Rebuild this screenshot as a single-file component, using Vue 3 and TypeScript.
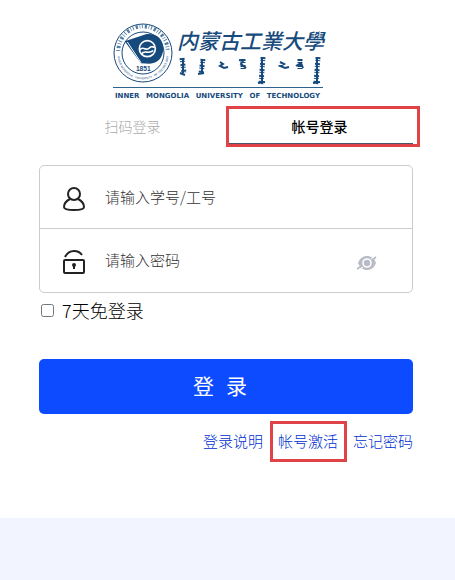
<script setup lang="ts">
import { ref } from 'vue'

type LoginMode = 'scan' | 'account'

const mode = ref<LoginMode>('account')
const account = ref('')
const password = ref('')
const remember = ref(false)
const passwordVisible = ref(false)

const englishName = ['INNER', 'MONGOLIA', 'UNIVERSITY', 'OF', 'TECHNOLOGY']
const ringWords = [
  { text: 'INNER MONGOLIA', offset: '20%' },
  { text: 'UNIVERSITY', offset: '51%' },
  { text: 'OF TECHNOLOGY', offset: '81%' },
]
const links = [
  { label: '登录说明', marked: false },
  { label: '帐号激活', marked: true },
  { label: '忘记密码', marked: false },
]
</script>

<template>
  <main class="page">
    <section class="panel">
      <header class="brand">
        <div class="brand-top">
          <svg class="seal" viewBox="0 0 180 180" aria-hidden="true">
            <defs>
              <path id="ring-lower" d="M13 92 A77 77 0 0 0 167 92" />
            </defs>
            <circle cx="90" cy="90" r="87" class="ring" stroke-width="3" />
            <path class="script" d="M16 84 A74 74 0 0 1 164 84" />
            <circle cx="90" cy="90" r="63" class="ring" stroke-width="3" />
            <text v-for="word in ringWords" :key="word.text" class="ring-text">
              <textPath href="#ring-lower" :startOffset="word.offset" text-anchor="middle">{{ word.text }}</textPath>
            </text>
            <path class="ink" d="M35 55 L101 33 C132 30 151 49 151 76 C151 104 133 122 110 122 L84 121 L76 110 Z" />
            <path d="M43 57 L84 119" stroke="#fff" stroke-width="3" fill="none" />
            <circle cx="103" cy="77" r="24" fill="none" stroke="#fff" stroke-width="5" />
            <path d="M80 81 C91 66 99 87 109 75 C114 69 119 70 125 74 M85 93 C97 78 103 96 121 83" fill="none" stroke="#fff" stroke-width="5" />
            <text x="91" y="144" class="year" text-anchor="middle">1851</text>
          </svg>
          <div class="names">
            <div class="chinese-name">内蒙古工業大學</div>
            <svg class="mongolian" viewBox="0 0 147 30" aria-hidden="true">
              <path class="stems" d="M6 1V16M25 2V17M85 0V27M140 0V27" />
              <path class="teeth" d="M5 1L7 16M26 2L24 17M66 2V12M86 0L84 27M123 2V12M141 0L139 27" />
              <path class="strokes" d="M43 5l3 2-3 2 4 2 4-1M62 3l4 1-2 3 5 4M103 5l4 2-4 2 5 2 4-1M119 9l5-3 2 5M3 16l5 2M21 17l6-1M81 26l7-1M136 26l7-1" />
            </svg>
          </div>
        </div>
        <div class="english-name"><span v-for="word in englishName" :key="word">{{ word }}</span></div>
      </header>

      <div class="tabs" role="tablist">
        <button type="button" role="tab" class="tab" :class="{ active: mode === 'scan' }" :aria-selected="mode === 'scan'" @click="mode = 'scan'">扫码登录</button>
        <button type="button" role="tab" class="tab marked" :class="{ active: mode === 'account' }" :aria-selected="mode === 'account'" @click="mode = 'account'">帐号登录</button>
      </div>

      <form @submit.prevent>
        <div class="fields">
          <div class="field">
            <label for="account">
              <svg class="icon" viewBox="0 0 24 26" aria-hidden="true">
                <circle cx="12" cy="8" r="6" />
                <path d="M8 13C4 15 2 18 2 21C2 23 5 24 12 24S22 23 22 21C22 18 20 15 16 13" />
              </svg>
            </label>
            <input id="account" v-model="account" type="text" aria-label="请输入学号/工号" placeholder="请输入学号/工号" />
          </div>
          <div class="field">
            <label for="password">
              <svg class="icon" viewBox="0 0 24 26" aria-hidden="true">
                <rect x="2" y="11" width="20" height="13" rx="1" />
                <path d="M3 8C5 4 8 2 12 2C16 2 18 3 20 6" />
                <path d="M12 16V20" />
                <circle cx="12" cy="16" r="1" class="dot" />
              </svg>
            </label>
            <input id="password" v-model="password" :type="passwordVisible ? 'text' : 'password'" aria-label="请输入密码" placeholder="请输入密码" />
            <button type="button" class="eye" aria-label="显示密码" @click="passwordVisible = !passwordVisible">
              <svg viewBox="0 0 20 16" aria-hidden="true">
                <path d="M1 8C3 3 6 1 10 1S17 3 19 8C17 13 14 15 10 15S3 13 1 8Z" fill="#b9bbc6" />
                <circle cx="10" cy="8" r="4" fill="#b9bbc6" stroke="#fff" stroke-width="1.6" />
                <path d="M0 14L5 11M15 5L19 2" stroke="#b9bbc6" stroke-width="2" />
                <path d="M1 15L6 12M14 4L18 1" stroke="#fff" stroke-width="1" />
              </svg>
            </button>
          </div>
        </div>

        <label class="remember"><input v-model="remember" type="checkbox" />7天免登录</label>

        <button type="submit" class="submit"><span>登</span><span>录</span></button>
      </form>

      <nav class="links">
        <a v-for="link in links" :key="link.label" href="#" :class="{ marked: link.marked }">{{ link.label }}</a>
      </nav>
    </section>
  </main>
</template>

<style>
body {
  margin: 0;
  background: #f2f5ff;
}
</style>

<style scoped>
.page,
.page input,
.page button {
  font-family: "Noto Sans CJK SC", sans-serif;
  font-weight: 300;
}

.page * {
  box-sizing: border-box;
}

.panel {
  padding: 23px 42px 64px 39px;
  background: #fff;
}

.brand {
  width: 226px;
  margin: 0 auto;
  padding-right: 16px;
  color: #174a7c;
}

.brand-top {
  display: flex;
  gap: 4px;
  height: 65px;
  border-bottom: 1px solid #2c648e;
}

.seal {
  flex: none;
  width: 60px;
  height: 60px;
}

.ring {
  fill: none;
  stroke: #174a7c;
}

.script {
  fill: none;
  stroke: #5580a6;
  stroke-width: 12;
  stroke-dasharray: 3 6 7 5 2 5;
}

.ring-text {
  fill: #174a7c;
  font: 400 9px "Liberation Sans", sans-serif;
}

.ink {
  fill: #174a7c;
}

.year {
  fill: #174a7c;
  font: 700 20px "Liberation Sans", sans-serif;
}

.names {
  flex: 1;
  min-width: 0;
}

.chinese-name {
  height: 34px;
  font-family: "Noto Sans CJK TC", sans-serif;
  font-size: 21px;
  font-style: italic;
  font-weight: 500;
  line-height: 34px;
  white-space: nowrap;
}

.mongolian {
  display: block;
  width: 147px;
  height: 30px;
  fill: none;
  stroke: #174a7c;
}

.stems {
  stroke-width: 2;
}

.teeth {
  stroke-width: 5;
  stroke-dasharray: 2 1 1 2;
}

.strokes {
  stroke-width: 2;
}

.english-name {
  display: flex;
  justify-content: space-between;
  padding: 3px 3px 0 2px;
  font-family: "DejaVu Sans", sans-serif;
  font-size: 7px;
  font-weight: 700;
  line-height: 10px;
}

.tabs {
  display: grid;
  grid-template-columns: 1fr 1fr;
  height: 35px;
  margin-top: 8px;
}

.tab {
  position: relative;
  padding: 0;
  border: 0;
  border-bottom: 1px solid transparent;
  background: none;
  color: #aaa;
  font-size: 14px;
}

.page .tab.active {
  border-color: #49566a;
  color: #000;
  font-weight: 500;
}

.tab.marked::after {
  content: "";
  position: absolute;
  inset: -3px -7px -4px 0;
  border: 3px solid #df4347;
  pointer-events: none;
}

.fields {
  margin-top: 21px;
  border: 1px solid #ccc;
  border-radius: 5px;
}

.field {
  display: flex;
  align-items: center;
  height: 62px;
  padding: 0 35px 0 22px;
}

.field + .field {
  height: 64px;
  border-top: 1px solid #ccc;
}

.icon {
  display: block;
  width: 24px;
  height: 26px;
  margin-top: 3px;
  fill: none;
  stroke: #222;
  stroke-width: 2;
}

.dot {
  fill: #222;
}

.field input {
  flex: 1;
  min-width: 0;
  height: 40px;
  margin-left: 19px;
  padding: 0 0 2px;
  border: 0;
  outline: 0;
  background: none;
  font-size: 15px;
}

.field input::placeholder {
  color: #333;
}

.eye {
  padding: 4px 0 0;
  border: 0;
  background: none;
}

.eye svg {
  display: block;
  width: 20px;
  height: 16px;
}

.remember {
  display: flex;
  align-items: center;
  gap: 8px;
  width: max-content;
  height: 34px;
  color: #000;
  font-size: 18px;
}

.remember input {
  width: 13px;
  height: 13px;
  margin: 0 0 0 2px;
}

.submit {
  display: flex;
  justify-content: center;
  align-items: center;
  gap: 12px;
  width: 100%;
  height: 55px;
  margin-top: 32px;
  padding: 0 12px 3px 0;
  border: 0;
  border-radius: 5px;
  background: #0c4bff;
  color: #fff;
  font-size: 21px;
}

.page .submit {
  font-weight: 400;
}

.links {
  display: flex;
  justify-content: flex-end;
  gap: 15px;
  margin-top: 15px;
  padding-bottom: 1px;
  font-size: 15px;
  line-height: 24px;
}

.links a {
  position: relative;
  color: #0030d0;
  text-decoration: none;
}

.links a.marked::after {
  content: "";
  position: absolute;
  inset: -8px -9px -9px -8px;
  border: 3px solid #df4347;
  pointer-events: none;
}
</style>
